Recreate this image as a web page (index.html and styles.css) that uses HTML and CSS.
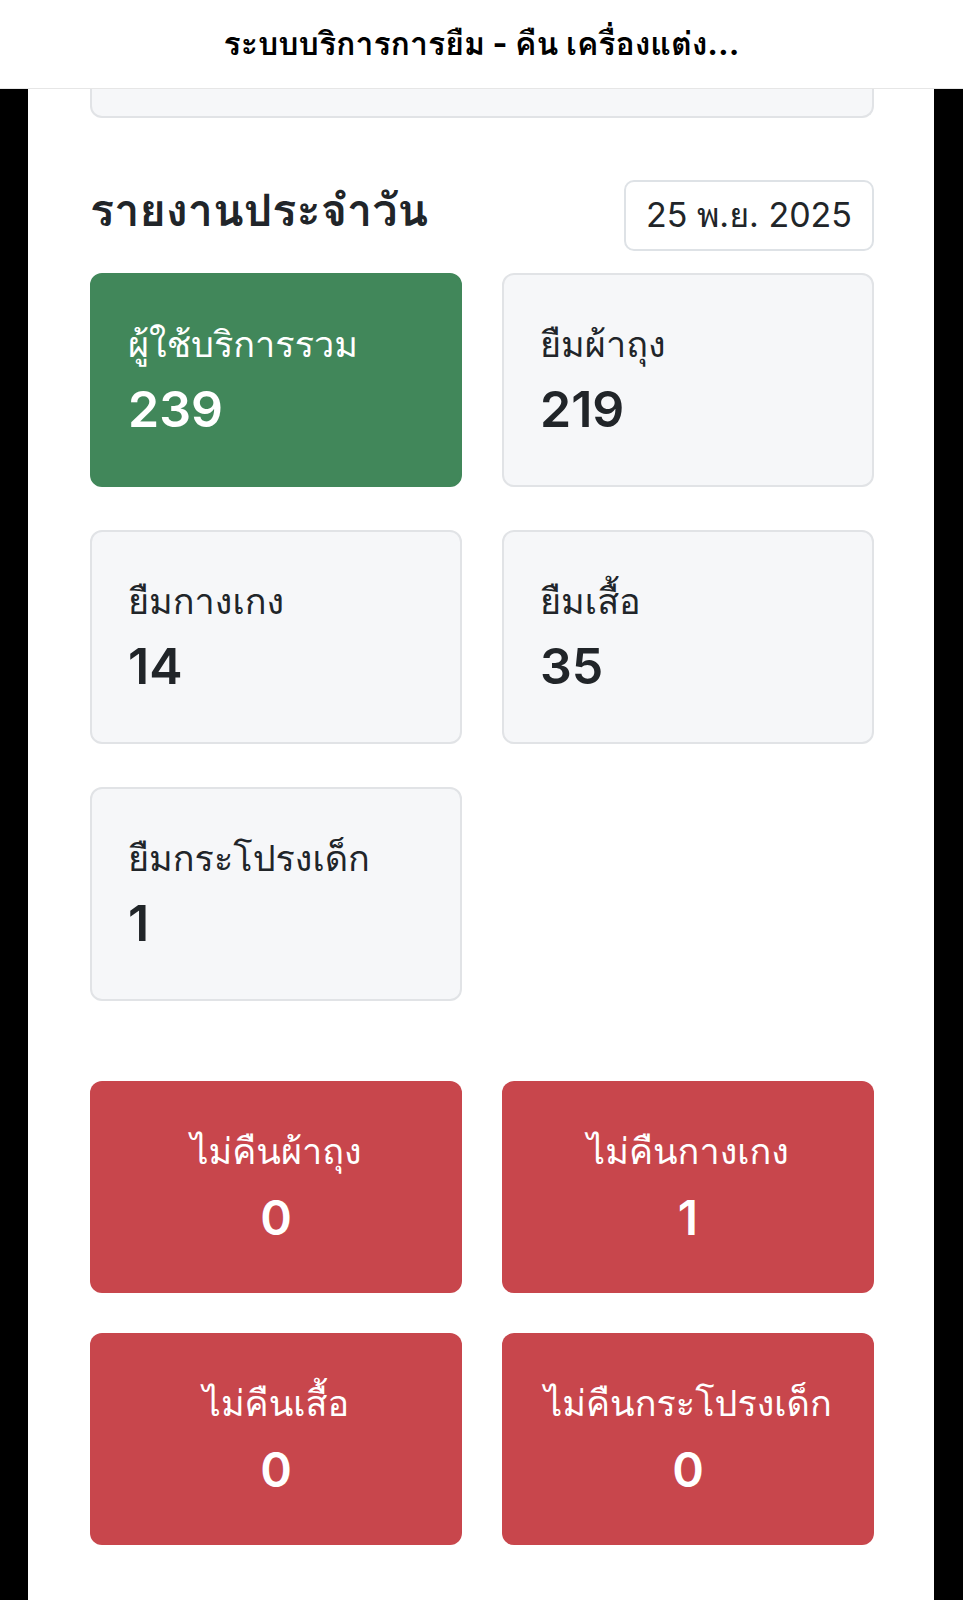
FILE: index.html
```html
<!DOCTYPE html>
<html lang="th">
<head>
<meta charset="utf-8">
<title>ระบบบริการการยืม - คืน เครื่องแต่งกาย</title>
<link rel="stylesheet" href="styles.css">
</head>
<body>
<header class="topbar">
  <h1 class="topbar-title">ระบบบริการการยืม - คืน เครื่องแต่ง...</h1>
</header>
<main class="page">
  <div class="prev-card"></div>

  <section class="report">
    <div class="report-head">
      <h2 class="report-title">รายงานประจำวัน</h2>
      <div class="date-box">25 พ.ย. 2025</div>
    </div>

    <div class="stat-grid">
      <div class="stat stat-green">
        <div class="stat-label">ผู้ใช้บริการรวม</div>
        <div class="stat-value">239</div>
      </div>
      <div class="stat">
        <div class="stat-label">ยืมผ้าถุง</div>
        <div class="stat-value">219</div>
      </div>
      <div class="stat">
        <div class="stat-label">ยืมกางเกง</div>
        <div class="stat-value">14</div>
      </div>
      <div class="stat">
        <div class="stat-label">ยืมเสื้อ</div>
        <div class="stat-value">35</div>
      </div>
      <div class="stat">
        <div class="stat-label">ยืมกระโปรงเด็ก</div>
        <div class="stat-value">1</div>
      </div>
    </div>

    <div class="due-grid">
      <div class="due">
        <div class="due-label">ไม่คืนผ้าถุง</div>
        <div class="due-value">0</div>
      </div>
      <div class="due">
        <div class="due-label">ไม่คืนกางเกง</div>
        <div class="due-value">1</div>
      </div>
      <div class="due">
        <div class="due-label">ไม่คืนเสื้อ</div>
        <div class="due-value">0</div>
      </div>
      <div class="due">
        <div class="due-label">ไม่คืนกระโปรงเด็ก</div>
        <div class="due-value">0</div>
      </div>
    </div>
  </section>
</main>
</body>
</html>
```

FILE: styles.css
```css
* { box-sizing: border-box; }

html, body {
  margin: 0;
  padding: 0;
}

body {
  background: #000;
  font-family: Inter, "Loma", "Garuda", "Noto Sans Thai Looped", "Noto Sans Thai", "Noto Sans", "Liberation Sans", sans-serif;
  color: #212529;
}

.topbar {
  height: 89px;
  background: #fff;
  border-bottom: 1px solid #e6e6e6;
  display: flex;
  align-items: center;
  justify-content: center;
}

.topbar-title {
  margin: 0;
  font-size: 32px;
  font-weight: 700;
  line-height: 1.2;
  color: #000;
}

.page {
  margin: 0 29px 0 28px;
  background: #fff;
  padding: 0 60px 60px 62px;
  min-height: 1511px;
}

.prev-card {
  height: 29px;
  background: #f6f7f9;
  border: 2px solid #e1e3e6;
  border-top: none;
  border-radius: 0 0 12px 12px;
}

.report-head {
  margin-top: 62px;
  display: flex;
  justify-content: space-between;
  align-items: center;
}

.report-title {
  margin: 0 0 12px;
  font-size: 45px;
  font-weight: 700;
  line-height: 1.2;
  color: #212529;
}

.date-box {
  width: 250px;
  height: 71px;
  border: 2px solid #dee2e6;
  border-radius: 10px;
  display: flex;
  align-items: center;
  justify-content: center;
  font-size: 34px;
  line-height: 1.2;
  color: #212529;
}

.stat-grid {
  margin-top: 22px;
  display: grid;
  grid-template-columns: 1fr 1fr;
  column-gap: 40px;
  row-gap: 43px;
}

.stat {
  height: 214px;
  background: #f6f7f9;
  border: 2px solid #e1e3e6;
  border-radius: 12px;
  padding: 0 36px;
  display: flex;
  flex-direction: column;
  justify-content: center;
  gap: 12px;
}

.stat-green {
  background: #41875a;
  border-color: #41875a;
  color: #fff;
}

.stat-label {
  font-size: 36px;
  line-height: 1.3;
}

.stat-value {
  font-size: 50px;
  font-weight: 600;
  line-height: 1.2;
}

.due-grid {
  margin-top: 80px;
  display: grid;
  grid-template-columns: 1fr 1fr;
  column-gap: 40px;
  row-gap: 40px;
}

.due {
  height: 212px;
  background: #c8464c;
  border-radius: 12px;
  color: #fff;
  display: flex;
  flex-direction: column;
  justify-content: center;
  align-items: center;
  gap: 14px;
  text-align: center;
}

.due-label {
  font-size: 36px;
  line-height: 1.3;
}

.due-value {
  font-size: 48px;
  font-weight: 600;
  line-height: 1.2;
}
```
